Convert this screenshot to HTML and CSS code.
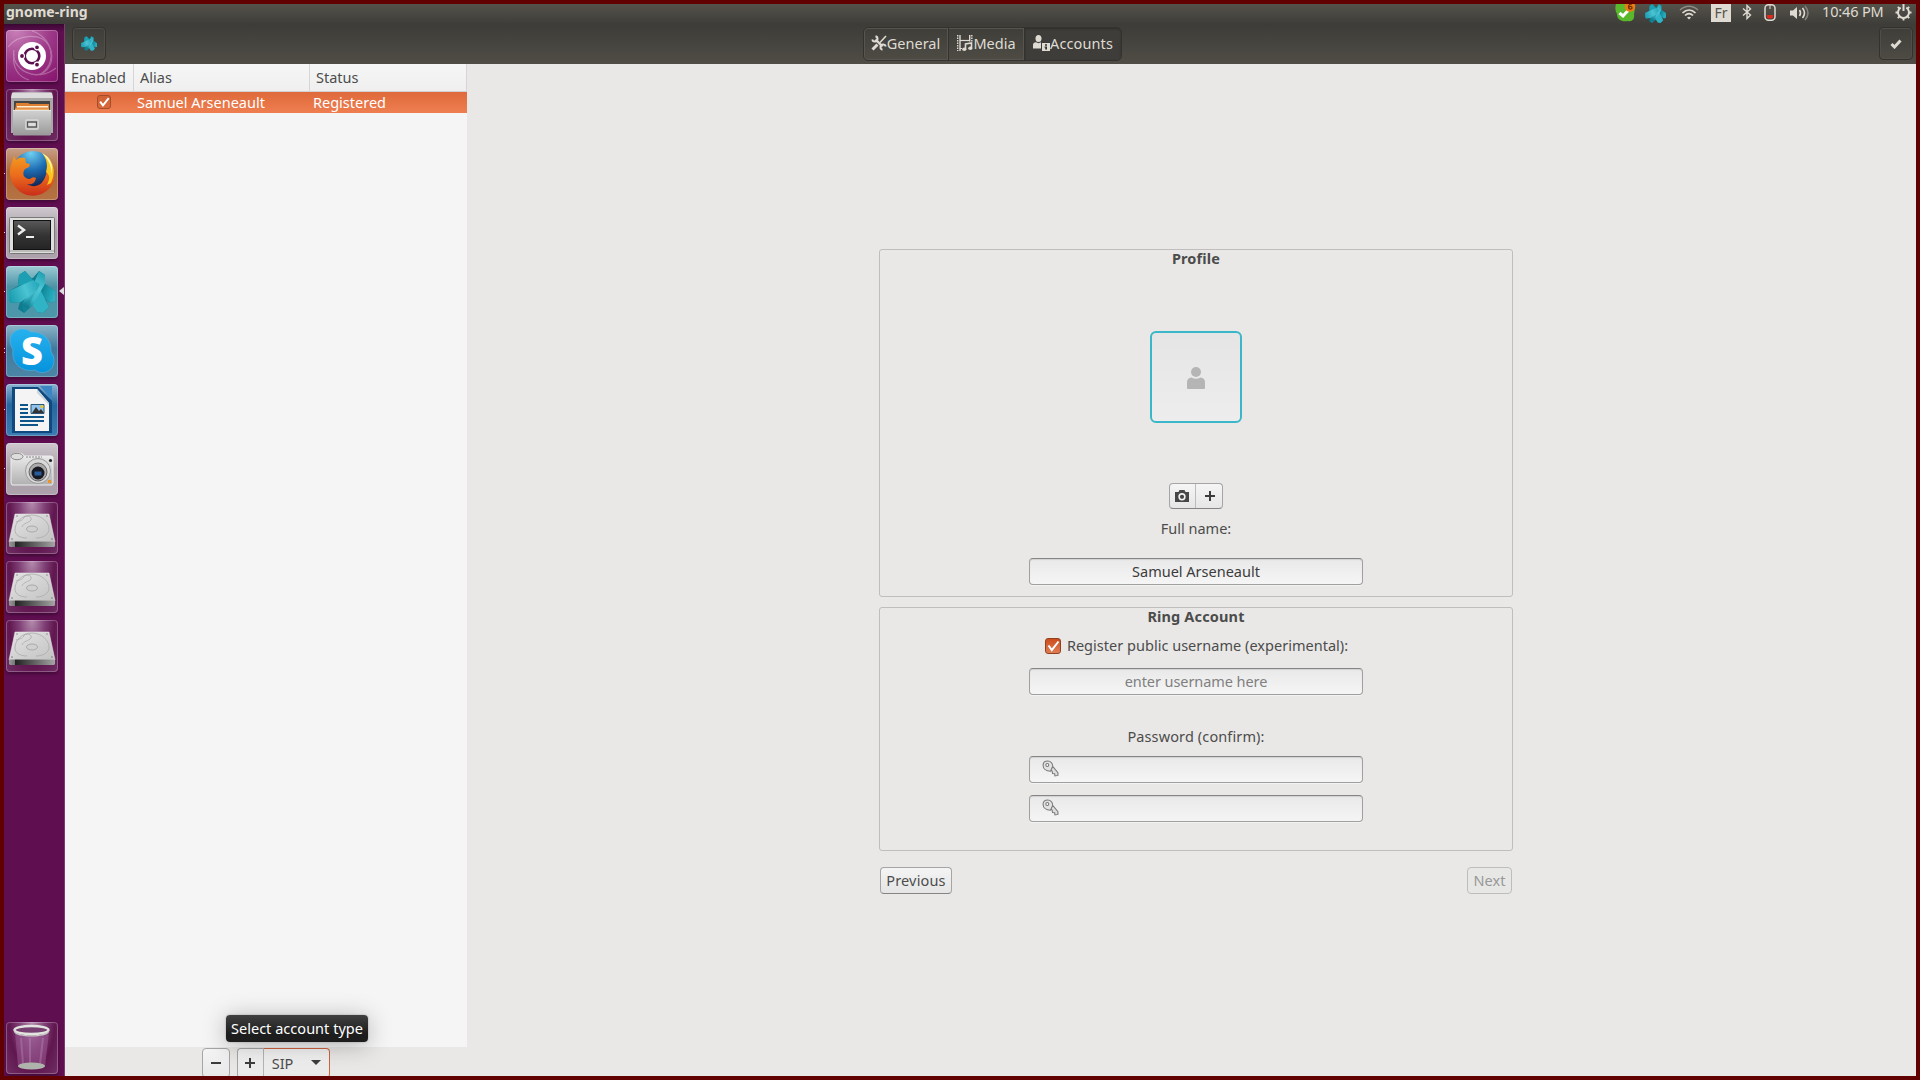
FILE: index.html
```html
<!DOCTYPE html>
<html lang="en">
<head>
<meta charset="utf-8">
<title>gnome-ring</title>
<link rel="stylesheet" href="styles.css">
</head>
<body>
<svg class="defs" width="0" height="0" aria-hidden="true">
  <defs>
    <linearGradient id="metal" x1="0" y1="0" x2="0" y2="1"><stop offset="0" stop-color="#d2d2d2"/><stop offset="1" stop-color="#999"/></linearGradient>
    <linearGradient id="body" x1="0" y1="0" x2="0" y2="1"><stop offset="0" stop-color="#efefef"/><stop offset="1" stop-color="#b0b0b0"/></linearGradient>
    <linearGradient id="diskTop" x1="0" y1="0" x2="1" y2="1"><stop offset="0" stop-color="#e4e4e4"/><stop offset="1" stop-color="#c2c2c2"/></linearGradient>
    <linearGradient id="diskSide" x1="0" y1="0" x2="1" y2="0"><stop offset="0" stop-color="#999"/><stop offset=".12" stop-color="#777"/><stop offset=".14" stop-color="#222"/><stop offset="1" stop-color="#a5a5a5"/></linearGradient>
    <linearGradient id="screen" x1="0" y1="0" x2="0" y2="1"><stop offset="0" stop-color="#5a5a5a"/><stop offset=".5" stop-color="#343434"/><stop offset="1" stop-color="#242424"/></linearGradient>
    <linearGradient id="fox" x1="0" y1="0" x2="0" y2="1"><stop offset="0" stop-color="#f29a1f"/><stop offset=".5" stop-color="#ec6a1c"/><stop offset="1" stop-color="#c92d1a"/></linearGradient>
    <radialGradient id="globe" cx=".45" cy=".05" r=".85"><stop offset="0" stop-color="#6fd0f2"/><stop offset=".5" stop-color="#1e6eb4"/><stop offset="1" stop-color="#10224f"/></radialGradient>
    <linearGradient id="band" gradientUnits="userSpaceOnUse" x1="34" y1="2" x2="12" y2="40"><stop offset="0" stop-color="#1fa0b3"/><stop offset=".35" stop-color="#4ec6d5"/><stop offset=".65" stop-color="#3ab7c8"/><stop offset=".85" stop-color="#118598"/></linearGradient>
    <linearGradient id="bandLeft" gradientUnits="userSpaceOnUse" x1="0" y1="26" x2="28" y2="14"><stop offset="0" stop-color="#1a9db0"/><stop offset=".6" stop-color="#4bc3d2"/><stop offset="1" stop-color="#2aabbd"/></linearGradient>
    <linearGradient id="bandRight" gradientUnits="userSpaceOnUse" x1="28" y1="20" x2="46" y2="26"><stop offset="0" stop-color="#0d7284"/><stop offset=".4" stop-color="#1590a3"/><stop offset="1" stop-color="#2eb2c4"/></linearGradient>
    <linearGradient id="skype" x1="0" y1="0" x2="0" y2="1"><stop offset="0" stop-color="#27b1ee"/><stop offset="1" stop-color="#0593dc"/></linearGradient>
    <symbol id="ring" viewBox="0 0 46 42">
      <path d="M10 4 16 0 22 7 24 7 30 0 36 4 36 13 46 20 46 30 42 32 37 29 40 36 34 42 28 41 24 33 15 42 9 38 11 31 2 32 0 29 0 20 9 15z" fill="#0f7b8e"/>
      <path d="M10 4 16 0 24 9 17 13 9 15z" fill="#1c9fb2"/>
      <path d="M36 13 46 20 46 30 42 32 29 23z" fill="url(#bandRight)"/>
      <path d="M17 24 26 17 32 20 40 36 34 42 28 41z" fill="#2fb3c5"/>
      <path d="M30 0 36 4 36 13 23 35 15 42 13 33 25 12z" fill="url(#band)"/>
      <path d="M0 20 24 9 31 13 28 19 12 31 2 32 0 29z" fill="url(#bandLeft)"/>
      <path d="M28 19 31 13 24 25 19 38 13 34z" fill="#0b6c7d" opacity=".25"/>
    </symbol>
    <symbol id="disk" viewBox="0 0 52 52">
      <path d="M9 12h34l6 28H3z" fill="url(#diskTop)" stroke="#eee" stroke-width=".5"/>
      <path d="M3 39.500h46v4.500l-1 1H4l-1-1z" fill="url(#diskSide)"/>
      <path d="M21 36c-7 0-12-3-12-8 0-8 7-15 17-15 9 0 17 7 17 14 0 5-5 9-13 9M10 20c4-1 8-2 8-5 5-2 8 0 7 3-2 3-8 3-9 7" fill="none" stroke="#ababab" stroke-width=".8"/>
      <ellipse cx="26" cy="27" rx="5.500" ry="3" fill="#d0d0d0" stroke="#aaa"/>
      <g fill="#777"><circle cx="11" cy="14" r=".7"/><circle cx="41" cy="14" r=".7"/><circle cx="6" cy="37" r=".8"/><circle cx="46" cy="37" r=".8"/></g>
    </symbol>
    <symbol id="key" viewBox="0 0 16 16">
      <path d="m7.500 8.500 3-2 4.500 5.500v2.500l-2.800.5-.3-2-2-.3-.3-2z" fill="#ddd" stroke="#7a7a7a"/>
      <path d="M5.500 1C8 1 10.300 3 10 6L8 10.500C3.500 10.500 1 8 1 5 1 2.500 3 1 5.500 1z" fill="#e2e2e2" stroke="#7a7a7a"/><circle cx="5" cy="4.700" r="1.400" fill="#fff" stroke="#777"/>
    </symbol>
  </defs>
</svg>

<div class="desktop">
  <header class="panel">
    <span class="panel-title">gnome-ring</span>
    <div class="indicators">
      <svg class="ind-skype" width="24" height="20" viewBox="0 0 24 20"><path d="M3 0h17c2 3 2 6 1 10 1 5-2 8-6 7-6 1-11-1-11-7C2 7 2 3 3 0z" fill="#59b82c"/><path d="m6.500 9 3.500 3 6-6.500" fill="none" stroke="#fff" stroke-width="3"/><circle cx="17" cy="2.500" r="5.300" fill="#ee7a14"/><path d="M18.800.3c-2-.8-3.300.8-3.300 2.700 0 2.700 3.500 2.600 3.500.7 0-1.900-3-1.600-3.300-.1" fill="none" stroke="#6c3002" stroke-width="1.300"/></svg>
      <svg class="ind-ring" width="21" height="19"><use href="#ring" width="21" height="19"/></svg>
      <svg class="ind-wifi" width="20" height="15" viewBox="0 0 20 15" fill="none"><path d="M1 5c5.500-5 12.500-5 18 0" stroke="#8e8c84" stroke-width="1.500"/><path d="M3.500 8c4-4 9-4 13 0" stroke="#dfdbd2" stroke-width="1.700"/><path d="M6 10.500c2.500-2.500 5.500-2.500 8 0" stroke="#dfdbd2" stroke-width="1.700"/><path d="m8 12.500c1.300-1 2.700-1 4 0l-2 2z" fill="#dfdbd2"/></svg>
      <span class="ind-lang">Fr</span>
      <svg class="ind-bt" width="10" height="16" viewBox="0 0 10 16"><path d="m1 4.500 7.500 6.500L5 14.500V1.500L8.500 5 1 11.500" fill="none" stroke="#dfdbd2" stroke-width="1.400"/></svg>
      <svg class="ind-mouse" width="12" height="17" viewBox="0 0 12 17"><rect x="1" y=".8" width="10" height="15.400" rx="3.500" fill="none" stroke="#dfdbd2" stroke-width="1.500"/><path d="M6 1v4" stroke="#dfdbd2"/><path d="M3 11h6v2.500l-1 1H4l-1-1z" fill="#e0281c"/></svg>
      <svg class="ind-vol" width="21" height="16" viewBox="0 0 21 16" fill="none"><path d="M1 5.500h3l4-3.500v12l-4-3.500H1z" fill="#dfdbd2"/><path d="M10.500 5q2 3 0 6M13.500 3q4 5 0 10" stroke="#dfdbd2" stroke-width="1.600"/><path d="M16 1q6 7 0 14" stroke="#85837c" stroke-width="1.600"/></svg>
      <span class="clock">10:46 PM</span>
      <svg class="ind-gear" width="17" height="17" viewBox="0 0 17 17" fill="none" stroke="#dfdbd2"><path d="M5.700 3.700a5.500 5.500 0 1 0 5.600 0" stroke-width="2"/><path d="M8.500 0v7" stroke-width="2"/><path d="M.5 8.500h3m10 0h3M8.500 13.500v3M2.800 2.800l2 2m9.400-2-2 2M2.800 14.200l2-2m9.400 2-2-2" stroke-width="1.900"/></svg>
    </div>
  </header>

  <div class="body">
    <nav class="launcher">
      <div class="tile tile-dash"><svg viewBox="0 0 52 52"><g fill="none" stroke="#fff" opacity=".28" stroke-width="1.200"><path d="M2 17C12 4 36 2 43 16s0 28-14 29"/><path d="M26 1c20 6 26 30 10 42"/><path d="M50 38C30 54 4 39 8 20"/><path d="M23 50C12 47 6 37 8 24"/></g><circle cx="26" cy="26" r="14" fill="#fff"/><circle cx="26" cy="26" r="7.300" fill="none" stroke="#5e0f50" stroke-width="2.600"/><g fill="#5e0f50" stroke="#fff" stroke-width="1.200"><circle cx="16" cy="26" r="2.500"/><circle cx="31" cy="17.300" r="2.500"/><circle cx="31" cy="34.700" r="2.500"/></g></svg></div>
      <div class="tile tile-files"><svg viewBox="0 0 52 52"><path d="m6 4 1-.5h38l1 .5 1 5v35H5V9z" fill="#a8a8a8"/><path d="m6 4 1-.5h38l1 .5 1 5H5z" fill="#dcdcdc"/><path d="M8 12h36v12H8z" fill="#444"/><path d="M10 14h12l2 1h19v8H9z" fill="#de7f31"/><path d="M11 17h31v1.500H11z" fill="#fff0d8"/><path d="M9 19.500h34V22H9z" fill="#efac67"/><path d="M7 21h38v24.500l-1 1H8l-1-1z" fill="url(#metal)"/><path d="M7 21.500h38" stroke="#e6e6e6"/><rect x="19" y="30" width="14" height="11" rx="2" fill="#d0d0d0"/><path d="M21.500 33h9v5h-9z" fill="#ddd" stroke="#555" stroke-width="1.300"/></svg></div>
      <div class="tile tile-firefox run1"><svg viewBox="0 0 52 52"><circle cx="27" cy="23" r="20" fill="url(#globe)"/><path d="M5 17 8 8l2 4c3-3 6-3 9-2l1 5 4 1-1 3-4 2c-3 4-2 9 4 10 3 0 3-3 7-1-1 6-5 7-9 6 6 4 13 2 16-3 3-4 4-9 4-16 7 8 9 13 5 20-8 13-26 14-35 4C3 33 3 23 5 17z" fill="url(#fox)"/><path d="M36 5c11 6 15 18 9 30l-4 2c3-6 3-10-1-13 2-6 1-13-4-19z" fill="#fbc41e"/><path d="M36 5c8 4 12 11 9 22 1-8-2-15-9-22z" fill="#fff7a8"/></svg></div>
      <div class="tile tile-term run1"><svg viewBox="0 0 52 52"><rect x="3.500" y="10.500" width="45" height="36" rx="1" fill="#dededc" stroke="#777"/><path d="M4 44h44" stroke="#999"/><rect x="7.500" y="13.500" width="37" height="29" fill="url(#screen)" stroke="#111"/><path d="m12 18.500 6 4.500-6 4.500" fill="none" stroke="#eee" stroke-width="2.400"/><path d="M20 30h8" stroke="#eee" stroke-width="2"/></svg></div>
      <div class="tile tile-ring run1 focused"><svg viewBox="0 0 52 52"><use href="#ring" x="3" y="5" width="46" height="42"/></svg></div>
      <div class="tile tile-skype run2"><svg viewBox="0 0 52 52"><path d="M16 4c4 0 7 1 9 3 12-1 21 8 20 20 4 5 4 12 0 17-4 4-11 5-16 1C15 48 5 37 7 25 4 20 3 14 6 9c2-3 6-5 10-5z" fill="url(#skype)" stroke="#6db7db" stroke-width=".5"/></svg><span class="skype-s">S</span></div>
      <div class="tile tile-writer run1"><svg viewBox="0 0 52 52"><path d="M6 3h26l14 14v32H6z" fill="#10497f"/><path d="M34 2h12v14z" fill="#3d86c4"/><path d="M9 5h22l12 14v28H9z" fill="#f4f4f4"/><path d="m31 5 0 4 12 12v-2z" fill="#ccd5dc"/><path d="M14 21h8M14 25h8M14 29h8M14 33h24M14 37h24M14 41h18" stroke="#0e558a" stroke-width="2"/><path d="M25 20.500h13v9H25z" fill="#8fc3eb" stroke="#28577b"/><path d="m26 29 4-6 3 4 2-2 3 4z" fill="#333"/><circle cx="36" cy="22.500" r="1.500" fill="#f5c518"/></svg></div>
      <div class="tile tile-camera run1"><svg viewBox="0 0 52 52"><path d="M5 14c0-5 13-5 13-1h27l2 1v26l-1 2H6l-1-2z" fill="url(#body)" stroke="#eee"/><ellipse cx="11" cy="13.500" rx="6" ry="3.200" fill="#ddd" stroke="#888"/><path d="M20 14h16" stroke="#888" stroke-dasharray="2 1"/><circle cx="32" cy="28" r="12.500" fill="#d8d8d8" stroke="#999"/><circle cx="32" cy="29" r="9" fill="#aaa" stroke="#666"/><circle cx="32" cy="30" r="6.500" fill="#171a22"/><path d="M28.500 28.500h7v4h-7z" fill="#295c9d"/><circle cx="44.500" cy="17.500" r="1.600" fill="#222"/><path d="M42 37h3v3h-3z" fill="#ef9320"/></svg></div>
      <div class="tile tile-disk"><svg viewBox="0 0 52 52"><use href="#disk"/></svg></div>
      <div class="tile tile-disk"><svg viewBox="0 0 52 52"><use href="#disk"/></svg></div>
      <div class="tile tile-disk"><svg viewBox="0 0 52 52"><use href="#disk"/></svg></div>
      <div class="tile tile-trash"><svg viewBox="0 0 52 52"><path d="M9 11h34l-4 33c-1 4-26 4-27 0z" fill="#9a5a94" opacity=".55"/><path d="M15 16l2 26M24 16v26M37 16l-3 26" stroke="#caa0c6" opacity=".3" stroke-width="2"/><ellipse cx="25.500" cy="44" rx="13.500" ry="3.500" fill="#aeb3ac"/><ellipse cx="25.500" cy="8" rx="17" ry="4" fill="#774070" stroke="#e2e4e0" stroke-width="2.400"/><path d="M8 8c2 7 33 7 35 0v2c-2 6-33 6-35 0z" fill="#c7cac5"/></svg></div>
    </nav>

    <main class="window">
      <div class="headerbar">
        <button class="hb-btn"><svg width="16" height="15"><use href="#ring" width="16" height="15"/></svg></button>
        <div class="tabs">
          <button class="tab tab-general"><svg width="16" height="16" viewBox="0 0 16 16" fill="none" stroke="#dfdbd2"><path d="m4.500 4.500 7 7" stroke-width="2.400"/><path d="M4.500 1.200a2.700 2.700 0 1 1-3.300 3.300M11.500 14.800a2.700 2.700 0 1 1 3.300-3.300" stroke-width="2"/><path d="m15 1-6 6.500" stroke-width="1.600"/><path d="m6.500 9.500-5 5" stroke-width="3"/></svg><span>General</span></button>
          <button class="tab tab-media"><svg width="16" height="16" viewBox="0 0 16 16" fill="none" stroke="#dfdbd2"><path d="M.7 0v16M14.800 0v6.500" stroke-width="1.400" stroke-dasharray="1.500 1"/><path d="M3 0v16M12.700 0v6.500" stroke-width="1.400"/><path d="M3 5.500h10" stroke-width="1.200"/><path d="M8.500 14V9l6-1v5" stroke-width="1.600"/><path d="M3 13.500h2"/><ellipse cx="7.300" cy="14.200" rx="2.100" ry="1.700" fill="#dfdbd2" stroke="none"/><ellipse cx="13.300" cy="13.200" rx="2.100" ry="1.700" fill="#dfdbd2" stroke="none"/></svg><span>Media</span></button>
          <button class="tab tab-accounts"><svg width="17" height="16" viewBox="0 0 17 16" fill="#dfdbd2"><ellipse cx="5.500" cy="3.500" rx="3" ry="3.500"/><path d="M0 13.500V10q0-2.500 3-2.800l2.500 1L8 7.200h3v6.300z"/><path d="M8 7h9v9H8z" fill="#3b3a36"/><path d="M9 8h8v8H9z"/><path d="M12 9.300h2v1.500h-2zM11.500 11.500H14v3h-1.800v-2h-.7z" fill="#33322f"/></svg><span>Accounts</span></button>
        </div>
        <button class="hb-btn"><svg width="12" height="10" viewBox="0 0 12 10"><path d="m1.500 5 3 3L10.500 1.500" fill="none" stroke="#dfdbd2" stroke-width="3"/></svg></button>
      </div>

      <div class="content">
        <section class="sidebar">
          <div class="tree">
            <div class="tree-row tree-head"><span>Enabled</span><span>Alias</span><span>Status</span></div>
            <div class="tree-row tree-item"><span class="cell-check"><i class="check check-sel"><svg viewBox="0 0 14 14"><path d="m2.500 6.500 3.300 4.500L12.500 2.500" fill="none" stroke="#fff" stroke-width="2.200"/></svg></i></span><span>Samuel Arseneault</span><span>Registered</span></div>
          </div>
          <div class="actions">
            <button class="act act-minus"><svg width="10" height="10" viewBox="0 0 10 10"><path d="M0 5h10" stroke="#3c3c3c" stroke-width="2"/></svg></button>
            <div class="act-group">
              <button class="act act-plus"><svg width="10" height="10" viewBox="0 0 10 10"><path d="M0 5h10M5 0v10" stroke="#3c3c3c" stroke-width="2"/></svg></button>
              <button class="act act-type"><span>SIP</span><svg width="10" height="5" viewBox="0 0 10 5"><path d="M0 0h10L5 5z" fill="#3c3c3c"/></svg></button>
            </div>
            <div class="tooltip">Select account type</div>
          </div>
        </section>

        <section class="page">
          <div class="wizard">
            <div class="frame frame-profile">
              <h2>Profile</h2>
              <div class="avatar"><svg width="18" height="22" viewBox="0 0 18 22" fill="#b5b5b5"><ellipse cx="9" cy="5" rx="5" ry="5"/><path d="M0 21v-6q0-4 4.500-4.500 4.500 2.500 9 0Q18 11 18 15v6q0 1-1 1H1q-1 0-1-1z"/></svg></div>
              <div class="photo-btns">
                <button><svg width="14" height="12" viewBox="0 0 14 12"><path d="M0 2h3.500L4.500 0h5l1 2H14v10H0z" fill="#474747"/><circle cx="7" cy="6.800" r="2.900" fill="none" stroke="#f2f2f2" stroke-width="1.600"/></svg></button>
                <button><svg width="10" height="10" viewBox="0 0 10 10"><path d="M0 5h10M5 0v10" stroke="#3c3c3c" stroke-width="2"/></svg></button>
              </div>
              <label class="lbl-name">Full name:</label>
              <div class="entry"><span>Samuel Arseneault</span></div>
            </div>
            <div class="frame frame-ring">
              <h2>Ring Account</h2>
              <label class="reg"><i class="check check-on"><svg viewBox="0 0 14 14"><path d="m2.500 6.500 3.300 4.500L12.500 2.500" fill="none" stroke="#fff" stroke-width="2"/></svg></i><span>Register public username (experimental):</span></label>
              <div class="entry placeholder"><span>enter username here</span></div>
              <label class="lbl-pass">Password (confirm):</label>
              <div class="entry pass"><svg width="17" height="17"><use href="#key" width="17" height="17"/></svg></div>
              <div class="entry pass"><svg width="17" height="17"><use href="#key" width="17" height="17"/></svg></div>
            </div>
            <div class="nav-btns"><button class="btn btn-prev">Previous</button><button class="btn btn-next" disabled>Next</button></div>
          </div>
        </section>
      </div>
    </main>
  </div>
</div>
</body>
</html>
```
FILE: styles.css
```css
* { box-sizing: border-box; }
html, body { margin: 0; height: 100%; overflow: hidden; }
body { font: 14.5px/20px "Noto Sans", sans-serif; color: #4c4c4c; }
button { font: inherit; color: inherit; margin: 0; padding: 0; border: 0; background: none; display: flex; align-items: center; justify-content: center; }
svg { display: block; flex: none; }
.defs { position: absolute; }

.desktop { width: 1920px; height: 1080px; border: 4px solid #600000; display: flex; flex-direction: column; overflow: hidden; background: #e9e8e6; }

/* Top panel */
.panel { height: 20px; flex: none; display: flex; justify-content: space-between; background: linear-gradient(#54524a, #3e3d39); color: #dfdbd2; }
.panel-title { font-weight: 700; font-size: 14px; line-height: 16px; padding-left: 2px; }
.indicators { display: flex; align-items: flex-start; height: 20px; padding-right: 4px; }
.ind-ring { margin-left: 8px; }
.ind-wifi { margin: 1px 0 0 13px; }
.ind-lang { width: 20px; height: 18px; margin-left: 12px; background: #dfdbd2; color: #55534c; text-align: center; line-height: 17px; font-size: 14px; }
.ind-bt { margin-left: 11px; }
.ind-mouse { margin-left: 12px; }
.ind-vol { margin: 1px 0 0 13px; }
.clock { width: 62px; margin-left: 12px; line-height: 15px; white-space: nowrap; letter-spacing: -.15px; }
.ind-gear { margin-left: 11px; }

.body { flex: 1; display: flex; min-height: 0; }

/* Launcher */
.launcher { width: 61px; flex: none; display: flex; flex-direction: column; gap: 7px; padding: 6px 0 2px 2px; background: linear-gradient(#3a0732, #5f0e50 8px); border-right: 1px solid #7b3a70; }
.tile { position: relative; width: 52px; height: 52px; flex: none; border-radius: 4px; box-shadow: inset 0 0 0 1px rgba(255,255,255,.25), 0 2px 3px rgba(0,0,0,.3); }
.tile svg { width: 52px; height: 52px; }
.tile-dash { background: radial-gradient(circle at 20% 0, #c880b8, #9a3585 55%, #86136c); }
.tile-files, .tile-disk, .tile-trash { background: radial-gradient(ellipse at 50% 0, #b58cae 0, #7f4076 35%, #61164f 62%, #6f3065); }
.tile-firefox { background: linear-gradient(#c8a088, #ad6838 45%, #b57243); }
.tile-term, .tile-camera { background: linear-gradient(#cfc8ce, #a79da6 50%, #aea3ac); }
.tile-ring { background: linear-gradient(#9fcbd5, #4a93a6 40%, #4c98aa); }
.tile-skype { background: linear-gradient(#8cb4c8, #417a9f 45%, #4c86a6); }
.tile-writer { background: linear-gradient(#8db4d2, #27679f 40%, #3b7cb2); }
.tile-trash { margin-top: auto; }
.skype-s { position: absolute; left: 6px; top: 0; width: 40px; height: 52px; font: 800 38px/50px "Open Sans", sans-serif; text-align: center; color: #fff; }
.run1::before, .run2::before { content: ""; position: absolute; left: -2px; top: 25px; width: 1px; height: 1px; background: #ddd; }
.run2::before { top: 23px; height: 5px; background: linear-gradient(#ddd 1px, transparent 1px 4px, #ddd 4px); }
.focused::after { content: ""; position: absolute; left: 53px; top: 21px; border: solid transparent; border-width: 4px 5px 4px 0; border-right-color: #ddd; }

/* Header bar */
.window { flex: 1; display: flex; flex-direction: column; min-width: 0; }
.headerbar { height: 40px; flex: none; display: flex; align-items: center; justify-content: space-between; padding: 0 3px 1px 7px; background: linear-gradient(#3d3c38, #504d46); color: #dfdbd2; }
.hb-btn { width: 34px; height: 33px; border: 1px solid #33322e; border-radius: 4px; box-shadow: inset 0 0 0 1px #504e47; }
.tabs { display: flex; width: 259px; height: 34px; margin-right: 1px; border: 1px solid #33322e; border-radius: 5px; box-shadow: inset 0 0 0 1px #57554d; }
.tab { border-right: 1px solid #33322e; box-shadow: inset -1px 0 #57554d; }
.tab span { padding-bottom: 2px; }
.tab svg { margin-top: -1px; }
.tab-general { width: 85px; }
.tab-media { width: 76px; padding-left: 1px; }
.tab-accounts { flex: 1; padding-left: 1px; border: 0; background: #3e3d39; border-radius: 0 4px 4px 0; box-shadow: inset 0 1px 2px #2e2d2a; letter-spacing: .1px; }

/* Account list */
.content { flex: 1; display: flex; min-height: 0; }
.sidebar { width: 402px; flex: none; display: flex; flex-direction: column; }
.tree { flex: 1; background: #f5f5f5; }
.tree-row { display: grid; grid-template-columns: 69px 176px 157px; }
.tree-head { height: 28px; line-height: 27px; border-bottom: 1px solid #d2d2d2; background: linear-gradient(#f6f6f6, #efefef); }
.tree-head span { padding-left: 6px; border-right: 1px solid #d6d6d6; }
.tree-item { height: 21px; background: linear-gradient(#df6a3b, #ee7e50); color: #fff; }
.tree-item span { padding-left: 3px; }
.tree-item span:last-child { padding-left: 3px; }
.tree-item .cell-check { padding: 3px 0 0 32px; }
.check { display: block; width: 14px; height: 14px; border-radius: 3px; border: 1px solid #a34d2c; }
.check svg { width: 100%; height: 100%; }
.check-sel { background: rgba(160,60,20,.25); }
.check-on { width: 16px; height: 16px; border-color: #93401f; background: linear-gradient(#cb4c1c, #df7d55); }
.actions { position: relative; height: 29px; flex: none; display: flex; padding: 1px 0 0 137px; gap: 7px; }
.act { height: 30px; padding-bottom: 1px; background: linear-gradient(#f5f5f5, #e8e8e8); }
.act-minus { width: 28px; border: 1px solid #a6a6a6; border-radius: 4px; }
.act-group { display: flex; }
.act-plus { width: 26px; padding-right: 1px; border: 1px solid #a6a6a6; border-right: 0; border-radius: 4px 0 0 4px; }
.act-type { width: 67px; gap: 18px; border: 1px solid #d0643e; border-left-color: #b5b5b5; border-radius: 0 4px 4px 0; }
.tooltip { position: absolute; left: 161px; top: -32px; width: 142px; height: 27px; border-radius: 4px; background: linear-gradient(#404040, #1d1d1d 70%); color: #fff; text-align: center; line-height: 27px; white-space: nowrap; letter-spacing: .03px; box-shadow: 0 3px 24px rgba(0,0,0,.28), 0 0 2px rgba(0,0,0,.3); }

/* Account wizard */
.page { flex: 1; padding: 185px 403px 0 412px; }
.wizard { width: 634px; }
.frame { border: 1px solid #bfbebc; border-radius: 3px; display: flex; flex-direction: column; align-items: center; }
.frame h2 { margin: 0; padding-bottom: 2px; font-size: 14.5px; line-height: 16px; font-weight: 700; letter-spacing: .15px; }
.frame-profile { height: 348px; }
.frame-ring { height: 244px; margin-top: 10px; }
.avatar { width: 92px; height: 92px; margin-top: 63px; padding-top: 2px; border: 2px solid #3ab7c9; border-radius: 6px; background: linear-gradient(#e5e5e5, #ededed); display: flex; align-items: center; justify-content: center; }
.photo-btns { display: flex; height: 26px; margin-top: 60px; border: 1px solid #a5a5a5; border-bottom-color: #858585; border-radius: 4px; background: linear-gradient(#f5f5f5, #e6e6e6); }
.photo-btns button { width: 25px; padding-right: 1px; }
.photo-btns button + button { width: 27px; padding: 0 0 0 1px; border-left: 1px solid #bcbcbc; }
.lbl-name { margin-top: 9px; }
.entry { width: 334px; height: 27px; border: 1px solid #a0a0a0; border-top-color: #858585; border-radius: 4px; background: linear-gradient(#e9e9e9, #f5f5f5); box-shadow: inset 0 1px 1px rgba(0,0,0,.1), 0 1px #f3f3f2; color: #3c3c3c; text-align: center; line-height: 25px; }
.lbl-name + .entry { margin-top: 20px; }
.reg { display: flex; align-items: center; gap: 6px; height: 20px; margin-top: 10px; padding-left: 1px; white-space: nowrap; letter-spacing: .02px; }
.reg span { padding-bottom: 2px; }
.placeholder { margin-top: 12px; color: #808080; letter-spacing: -.07px; }
.lbl-pass { margin: 31px 0 10px; letter-spacing: .12px; }
.pass { padding: 3px 0 0 12px; }
.pass + .pass { margin-top: 12px; }
.nav-btns { display: flex; justify-content: space-between; margin: 16px 1px 0; }
.btn { height: 27px; padding-bottom: 2px; border: 1px solid #a5a5a5; border-bottom-color: #858585; border-radius: 4px; background: linear-gradient(#f4f4f4, #e5e5e5); }
.btn-prev { width: 72px; letter-spacing: .15px; }
.btn-next { width: 45px; border-color: #bdbdbd; background: #e7e7e6; color: #989898; }
```
